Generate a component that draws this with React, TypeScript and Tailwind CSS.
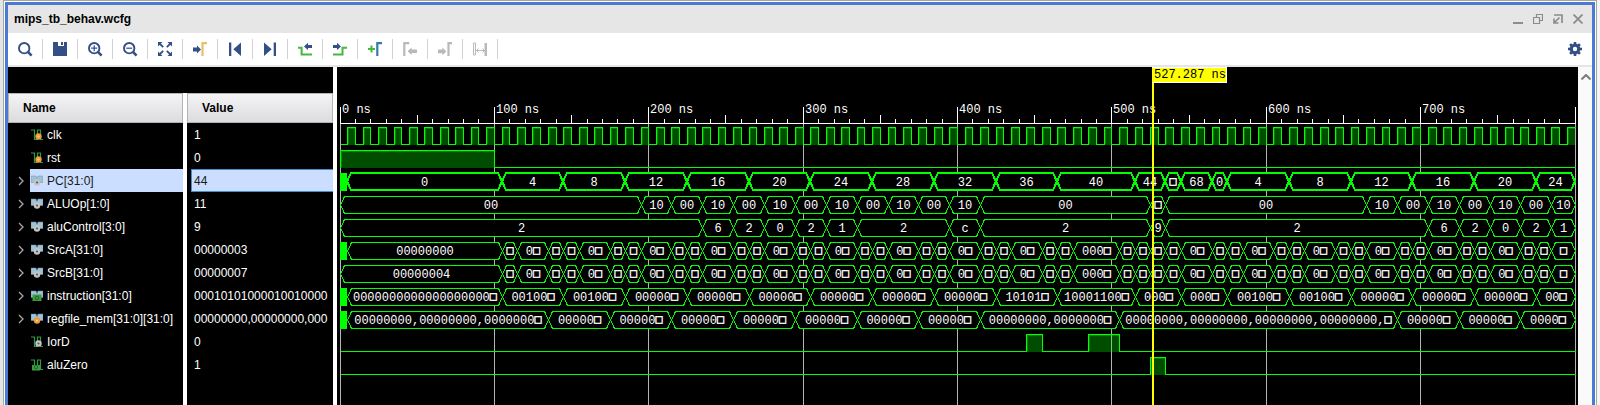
import type { ReactNode } from "react";

const NS_WIDTH = 1.54375;
const END = 800;
const LANE = 23;
const LANES_TOP = 56;
const GREEN = "#00ff00";

const px = (t: number) => Math.floor(t * NS_WIDTH);

type Segment = [end: number, label: string];

interface Signal {
  name: string;
  value: string;
  icon: "scalar" | "bus";
  badge: "orange" | "gray" | "green";
  selected?: boolean;
  pulses?: [number, number][];
  unknownUntil?: number;
  segments?: Segment[];
}

const srcTail: Segment[] = [
  [115, "□"], [135, "0□"], [145, "□"], [155, "□"], [175, "0□"], [185, "□"], [195, "□"],
  [215, "0□"], [225, "□"], [235, "□"], [255, "0□"], [265, "□"], [275, "□"], [295, "0□"],
  [305, "□"], [315, "□"], [335, "0□"], [345, "□"], [355, "□"], [375, "0□"], [385, "□"],
  [395, "□"], [415, "0□"], [425, "□"], [435, "□"], [455, "0□"], [465, "□"], [475, "□"],
  [505, "000□"], [515, "□"], [525, "□"], [535, "□"], [545, "□"], [565, "0□"], [575, "□"],
  [585, "□"], [605, "0□"], [615, "□"], [625, "□"], [645, "0□"], [655, "□"], [665, "□"],
  [685, "0□"], [695, "□"], [705, "□"], [725, "0□"], [735, "□"], [745, "□"], [765, "0□"],
  [775, "□"], [785, "□"], [800, "□"],
];

const clockPulses: [number, number][] = Array.from({ length: 80 }, (_, i) => [i * 10 + 5, i * 10 + 10]);

const signals: Signal[] = [
  { name: "clk", value: "1", icon: "scalar", badge: "orange", pulses: clockPulses },
  { name: "rst", value: "0", icon: "scalar", badge: "orange", pulses: [[0, 100]] },
  {
    name: "PC[31:0]", value: "44", icon: "bus", badge: "gray", selected: true, unknownUntil: 5,
    segments: [
      [105, "0"], [145, "4"], [185, "8"], [225, "12"], [265, "16"], [305, "20"], [345, "24"],
      [385, "28"], [425, "32"], [465, "36"], [515, "40"], [535, "44"], [545, "□"], [565, "68"],
      [575, "0"], [615, "4"], [655, "8"], [695, "12"], [735, "16"], [775, "20"], [800, "24"],
    ],
  },
  {
    name: "ALUOp[1:0]", value: "11", icon: "bus", badge: "gray",
    segments: [
      [195, "00"], [215, "10"], [235, "00"], [255, "10"], [275, "00"], [295, "10"], [315, "00"],
      [335, "10"], [355, "00"], [375, "10"], [395, "00"], [415, "10"], [525, "00"], [535, "□"],
      [665, "00"], [685, "10"], [705, "00"], [725, "10"], [745, "00"], [765, "10"], [785, "00"],
      [800, "10"],
    ],
  },
  {
    name: "aluControl[3:0]", value: "9", icon: "bus", badge: "gray",
    segments: [
      [235, "2"], [255, "6"], [275, "2"], [295, "0"], [315, "2"], [335, "1"], [395, "2"],
      [415, "c"], [525, "2"], [535, "9"], [705, "2"], [725, "6"], [745, "2"], [765, "0"],
      [785, "2"], [800, "1"],
    ],
  },
  {
    name: "SrcA[31:0]", value: "00000003", icon: "bus", badge: "gray", unknownUntil: 5,
    segments: [[105, "00000000"], ...srcTail],
  },
  {
    name: "SrcB[31:0]", value: "00000007", icon: "bus", badge: "gray",
    segments: [[105, "00000004"], ...srcTail],
  },
  {
    name: "instruction[31:0]", value: "00010101000010010000", icon: "bus", badge: "green",
    unknownUntil: 5,
    segments: [
      [105, "0000000000000000000□"], [145, "00100□"], [185, "00100□"], [225, "00000□"],
      [265, "00000□"], [305, "00000□"], [345, "00000□"], [385, "00000□"], [425, "00000□"],
      [465, "10101□"], [515, "10001100□"], [545, "000□"], [575, "000□"], [615, "00100□"],
      [655, "00100□"], [695, "00000□"], [735, "00000□"], [775, "00000□"], [800, "00□"],
    ],
  },
  {
    name: "regfile_mem[31:0][31:0]", value: "00000000,00000000,000", icon: "bus", badge: "orange",
    unknownUntil: 5,
    segments: [
      [135, "00000000,00000000,0000000□"], [175, "00000□"], [215, "00000□"], [255, "00000□"],
      [295, "00000□"], [335, "00000□"], [375, "00000□"], [415, "00000□"],
      [505, "00000000,0000000□"], [685, "00000000,00000000,00000000,00000000,□"],
      [725, "00000□"], [765, "00000□"], [800, "0000□"],
    ],
  },
  { name: "IorD", value: "0", icon: "scalar", badge: "gray", pulses: [[445, 455], [485, 505]] },
  { name: "aluZero", value: "1", icon: "scalar", badge: "green", pulses: [[525, 535]] },
];

const NAVY = "#334f86";
const LIME = "#45b93c";
const MUTED = "#b9b9b9";

function ToolIcon({ children }: { children: ReactNode }) {
  return (
    <svg className="size-4" viewBox="0 0 16 16" fill="none" aria-hidden="true">
      {children}
    </svg>
  );
}

function Lens({ children }: { children?: ReactNode }) {
  return (
    <ToolIcon>
      <circle cx="7.2" cy="7.2" r="5.2" stroke={NAVY} strokeWidth="1.9" />
      <path d="M11.2 11.2 14.6 14.6" stroke={NAVY} strokeWidth="2.6" />
      {children}
    </ToolIcon>
  );
}

const tools: { label: string; disabled?: boolean; icon: ReactNode }[] = [
  { label: "Find", icon: <Lens /> },
  {
    label: "Save",
    icon: (
      <ToolIcon>
        <path d="M1 1h5v4h6V1h3v14H1z" fill={NAVY} />
        <path d="M9 1h2v3H9z" fill={NAVY} />
      </ToolIcon>
    ),
  },
  {
    label: "Zoom In",
    icon: (
      <Lens>
        <path d="M4.2 7.2h6M7.2 4.2v6" stroke={NAVY} strokeWidth="1.2" />
      </Lens>
    ),
  },
  {
    label: "Zoom Out",
    icon: (
      <Lens>
        <path d="M4.2 7.2h6" stroke={NAVY} strokeWidth="1.2" />
      </Lens>
    ),
  },
  {
    label: "Zoom Fit",
    icon: (
      <ToolIcon>
        <path d="M1 1h4.5L1 5.5zM15 1v4.5L10.5 1zM1 15v-4.5L5.5 15zM15 15h-4.5l4.5-4.5z" fill={NAVY} />
        <path d="M2 2l4.2 4.2M14 2 9.8 6.2M2 14l4.2-4.2M14 14 9.8 9.8" stroke={NAVY} strokeWidth="1.8" />
      </ToolIcon>
    ),
  },
  {
    label: "Go to Cursor",
    icon: (
      <ToolIcon>
        <path d="M1 6.5h4V4.6L9 8.5 5 12.4v-2H1z" fill={NAVY} />
        <path d="M10.5 15V2.2H15" stroke="#e0c465" strokeWidth="2.2" />
      </ToolIcon>
    ),
  },
  {
    label: "Go to Start",
    icon: (
      <ToolIcon>
        <path d="M2 1.5h2.3v13.4H2zM14 1.5v13.4L6.3 8.2z" fill={NAVY} />
      </ToolIcon>
    ),
  },
  {
    label: "Go to End",
    icon: (
      <ToolIcon>
        <path d="M11.7 1.5H14v13.4h-2.3zM2 1.5v13.4l7.7-6.7z" fill={NAVY} />
      </ToolIcon>
    ),
  },
  {
    label: "Previous Transition",
    icon: (
      <ToolIcon>
        <path d="M1 6.8h3.6v6.8H15" stroke={LIME} strokeWidth="2" />
        <path d="M7 5.4 11 1.8v2.1h4v3.2h-4v2z" fill={NAVY} />
      </ToolIcon>
    ),
  },
  {
    label: "Next Transition",
    icon: (
      <ToolIcon>
        <path d="M1 13.4h9.5V6.8H15" stroke={LIME} strokeWidth="2" />
        <path d="M9 5.4 5 1.8v2.1H1v3.2h4v2z" fill={NAVY} />
      </ToolIcon>
    ),
  },
  {
    label: "Add Marker",
    icon: (
      <ToolIcon>
        <path d="M1 8h7M4.5 4.5v7" stroke={LIME} strokeWidth="2" />
        <path d="M10.3 15V2.2H15" stroke="#3579b1" strokeWidth="2.2" />
      </ToolIcon>
    ),
  },
  {
    label: "Previous Marker",
    disabled: true,
    icon: (
      <ToolIcon>
        <path d="M2.3 15V2.2h5" stroke={MUTED} strokeWidth="2.2" />
        <path d="M5.6 10.2 9.6 6.4v2H15v3.6H9.6v2z" fill={MUTED} />
      </ToolIcon>
    ),
  },
  {
    label: "Next Marker",
    disabled: true,
    icon: (
      <ToolIcon>
        <path d="M9.4 10.4 5.4 6.6v2H1v3.6h4.4v2z" fill={MUTED} />
        <path d="M11.5 15V2.2H15" stroke={MUTED} strokeWidth="2.2" />
      </ToolIcon>
    ),
  },
  {
    label: "Swap Cursors",
    disabled: true,
    icon: (
      <ToolIcon>
        <path d="M1.5 2h2v12h-2z" stroke={MUTED} />
        <path d="M12.5 2H15v13h-2.5z" fill={MUTED} />
        <path d="M4.5 9.5h8M6.5 7.5l-2 2 2 2M10.5 7.5l2 2-2 2" stroke={MUTED} />
      </ToolIcon>
    ),
  },
];

const windowControls: { label: string; icon: ReactNode }[] = [
  { label: "Minimize", icon: <path d="M0 9h10" strokeWidth="2" /> },
  { label: "Restore", icon: <path d="M3.5 3.5v-3h6v6h-3M.5 3.5h6v6h-6z" strokeWidth="1.2" /> },
  { label: "Float", icon: <path d="M1 1h8v8M6.5 3.5 2 8M1 4.5V9h4.5" strokeWidth="1.7" /> },
  { label: "Close", icon: <path d="M.5.5l9 9M9.5.5l-9 9" strokeWidth="1.8" /> },
];

const badgeColors = { orange: "#f09a35", gray: "#c4c4c4", green: "#3c9a3f" };

function SignalIcon({ icon, badge }: Pick<Signal, "icon" | "badge">) {
  const color = badgeColors[badge];
  return (
    <svg className="size-3 shrink-0" viewBox="0 0 12 12" fill="none" aria-hidden="true">
      {icon === "scalar" ? (
        <path d="M0 1h3.5v9.5h3V1h3v9.5H12" stroke="#2f9a45" strokeWidth="1.2" />
      ) : (
        <path d="M0 1h5l1 2.5L7 1h5v6.5H9.5L8 9H4L2.5 7.5H0z" fill="#9fc3d6" stroke="#6f8ea0" strokeWidth=".5" />
      )}
      {badge === "green" ? (
        <g>
          <path d={icon === "bus" ? "M1.5 4.5h9V11h-9z" : "M1 6h8v5.5H1z"} fill={color} />
          <circle cx={icon === "bus" ? 6 : 5} cy="8" r="1.7" stroke="#1f6a2a" />
        </g>
      ) : (
        <g>
          <circle cx={icon === "bus" ? 6 : 7.5} cy="7.5" r="3.2" fill={color} />
          <circle cx={icon === "bus" ? 6 : 7.5} cy="7.5" r="1.1" fill={badge === "orange" ? "#ffd9a0" : "#5a5a5a"} />
        </g>
      )}
    </svg>
  );
}

function SignalTable() {
  return (
    <table className="h-full w-[325px] table-fixed border-collapse text-left text-[12px] leading-4 text-white">
      <thead>
        <tr className="h-[30px] text-black">
          <th className="w-[175px] p-0 font-bold">
            <div className="flex h-[30px] items-center border border-[#b4b4b6] bg-linear-to-b from-[#f4f4f5] to-[#dcdce0] pl-3.5">
              Name
            </div>
          </th>
          <th className="w-1 bg-white p-0" aria-hidden="true" />
          <th className="p-0 font-bold">
            <div className="flex h-[30px] items-center border border-[#b4b4b6] bg-linear-to-b from-[#f4f4f5] to-[#dcdce0] pl-3.5">
              Value
            </div>
          </th>
        </tr>
      </thead>
      <tbody>
        {signals.map((s) => (
          <tr key={s.name} className="h-[23px]">
            <td className="p-0">
              <div className="flex h-[23px]">
                {s.icon === "bus" ? (
                  <button type="button" aria-label={`Expand ${s.name}`} className="flex w-[22px] items-center justify-center pl-1">
                    <svg className="h-2.5 w-1.5" viewBox="0 0 6 10" fill="none" aria-hidden="true">
                      <path d="M1 1l4 4-4 4" stroke="#a8a8a8" strokeWidth="1.3" />
                    </svg>
                  </button>
                ) : (
                  <span className="w-[22px]" />
                )}
                <span
                  className={
                    s.selected
                      ? "flex flex-1 items-center gap-1 bg-[#ccdeff] pl-px whitespace-nowrap text-[#1a1a1a]"
                      : "flex flex-1 items-center gap-1 pl-px whitespace-nowrap"
                  }
                >
                  <SignalIcon icon={s.icon} badge={s.badge} />
                  {s.name}
                </span>
              </div>
            </td>
            <td className="bg-white p-0" />
            <td className="overflow-hidden p-0">
              <div
                className={
                  s.selected
                    ? "ml-1 flex h-[23px] items-center border border-r-0 border-[#3d8fd1] bg-[#ccdeff] pl-0.5 text-[#1a1a1a]"
                    : "ml-1 flex h-[23px] items-center pl-[3px]"
                }
              >
                {s.value}
              </div>
            </td>
          </tr>
        ))}
        <tr>
          <td className="p-0" />
          <td className="bg-white p-0" />
          <td className="p-0" />
        </tr>
      </tbody>
    </table>
  );
}

function ScalarTrace({ pulses, top }: { pulses: [number, number][]; top: number }) {
  const high = top + 4;
  const low = top + 21;
  let line = pulses[0][0] === 0 ? "M.5" : `M.5 ${low + 0.5}H.5`;
  pulses.forEach(([a, b], i) => {
    const up = `${high + 0.5}H${px(b) + 0.5}`;
    line += i === 0 && a === 0 ? ` ${low + 0.5}V${up}` : `H${px(a) + 0.5}V${up}`;
    if (b < END) line += `V${low + 0.5}`;
  });
  line += `H${px(END) + 0.5}`;
  return (
    <g shapeRendering="crispEdges">
      {pulses.map(([a, b]) => (
        <g key={a} fill={GREEN}>
          <rect x={px(a)} y={high} width={px(b) - px(a)} height={low - high + 1} fillOpacity=".3" />
          <rect x={px(a) + 1} y={high + 1} width={px(b) - px(a) - 1} height="1" fillOpacity=".3" />
          <rect x={px(a) + 1} y={high + 2} width="1" height={low - high - 2} fillOpacity=".3" />
        </g>
      ))}
      <path d={line} fill="none" stroke={GREEN} />
    </g>
  );
}

function BusLabel({ label, x, y }: { label: string; x: number; y: number }) {
  const truncated = label.endsWith("□");
  return (
    <text x={x} y={y} textAnchor="middle" fill="#fff">
      {truncated ? label.slice(0, -1) : label}
      {truncated && (
        <tspan dy="-1" stroke="#fff" strokeWidth=".4" className="font-['DejaVu_Sans_Mono',monospace]">
          □
        </tspan>
      )}
    </text>
  );
}

function BusTrace({ signal, top }: { signal: Signal; top: number }) {
  const bold = signal.selected;
  const half = bold ? 0 : 0.5;
  const high = top + (bold ? 4 : 4.5);
  const low = top + (bold ? 21 : 21.5);
  const mid = (high + low) / 2;
  const first = signal.unknownUntil ?? 0;
  return (
    <g>
      {first > 0 && <rect x="0" y={top + 4} width={px(first)} height="18" fill={GREEN} />}
      {signal.segments!.map(([end, label], i, all) => {
        const start = i === 0 ? first : all[i - 1][0];
        const a = px(start) + half;
        const b = px(end) + half;
        return (
          <g key={end}>
            <path
              d={`M${a} ${mid}L${a + 4} ${high}H${b - 4}L${b} ${mid}L${b - 4} ${low}H${a + 4}Z`}
              fill="#000"
              stroke={GREEN}
              strokeWidth={bold ? 2 : 1}
              shapeRendering="crispEdges"
            />
            <BusLabel label={label} x={(a + b) / 2} y={top + 17} />
          </g>
        );
      })}
    </g>
  );
}

function Waveform() {
  return (
    <div className="relative min-w-0 flex-1 overflow-hidden bg-black">
      <svg
        className="absolute inset-0 h-full w-full font-['Liberation_Mono',monospace] text-[12px]"
        role="img"
        aria-label="Waveform"
      >
        <g transform="translate(3 0)">
          {Array.from({ length: 9 }, (_, i) => (
            <rect key={i} x={px(i * 100)} y={LANES_TOP} width="1" height="100%" fill="#b4b4b4" />
          ))}
          <rect x="0" y={LANES_TOP} width={px(END) + 1} height="1" fill="#fff" />
          {Array.from({ length: 81 }, (_, i) => {
            const h = i % 10 === 0 ? 16 : i % 5 === 0 ? 8 : 4;
            return <rect key={i} x={px(i * 10)} y={LANES_TOP - h} width="1" height={h} fill="#fff" />;
          })}
          {Array.from({ length: 8 }, (_, i) => (
            <text key={i} x={px(i * 100) + 2} y="46" fill="#fff">
              {i * 100} ns
            </text>
          ))}
          {signals.map((s, i) =>
            s.pulses ? (
              <ScalarTrace key={s.name} pulses={s.pulses} top={LANES_TOP + i * LANE} />
            ) : (
              <BusTrace key={s.name} signal={s} top={LANES_TOP + i * LANE} />
            ),
          )}
          <rect x="812" y="0" width="2" height="100%" fill="#ffff00" />
          <rect x="812" y="0" width="75" height="16" fill="#fff" />
          <rect x="812" y="1" width="74" height="14" fill="#ffff00" />
          <text x="814" y="11" fill="#000">
            527.287 ns
          </text>
        </g>
      </svg>
    </div>
  );
}

export default function App() {
  return (
    <div className="flex h-screen overflow-hidden bg-linear-to-r from-[#e4e4e4] to-[#f4f4f4] pr-[3px] pl-[3px] font-['Liberation_Sans',Arial,sans-serif]">
      <div className="flex min-w-0 flex-1 border-x border-t border-[#a5a5a5] bg-white px-px pt-px">
        <main className="flex min-w-0 flex-1 flex-col border-x-3 border-t-3 border-[#4a7bd0]">
          <header className="flex h-7 shrink-0 items-center justify-between bg-[#e6e6e6] pr-[9px] pl-1.5">
            <h1 className="text-[12px] leading-4 font-bold text-black">mips_tb_behav.wcfg</h1>
            <div className="flex gap-2.5">
              {windowControls.map((c) => (
                <button key={c.label} type="button" aria-label={c.label}>
                  <svg className="block size-2.5" viewBox="0 0 10 10" fill="none" stroke="#8c8c8c" aria-hidden="true">
                    {c.icon}
                  </svg>
                </button>
              ))}
            </div>
          </header>
          <div className="flex h-[34px] shrink-0 items-center border-b-2 border-[#e6e6e6] bg-white pr-[9px]" role="toolbar">
            {tools.map((t) => (
              <button
                key={t.label}
                type="button"
                aria-label={t.label}
                disabled={t.disabled}
                className="flex h-5 w-[35px] items-center justify-center border-r border-[#d2d2d2]"
              >
                {t.icon}
              </button>
            ))}
            <button type="button" aria-label="Settings" className="ml-auto">
              <svg className="block size-4" viewBox="0 0 16 16" aria-hidden="true">
                <g fill={NAVY}>
                  <path d="M6.7 1h2.6v14H6.7z" />
                  <path d="M6.7 1h2.6v14H6.7z" transform="rotate(45 8 8)" />
                  <path d="M6.7 1h2.6v14H6.7z" transform="rotate(90 8 8)" />
                  <path d="M6.7 1h2.6v14H6.7z" transform="rotate(135 8 8)" />
                  <circle cx="8" cy="8" r="5.4" />
                </g>
                <circle cx="8" cy="8" r="2.2" fill="#fff" />
              </svg>
            </button>
          </div>
          <div className="flex min-h-0 flex-1 bg-white">
            <section className="mr-1 flex w-[325px] shrink-0 flex-col overflow-hidden bg-black pt-[26px]">
              <SignalTable />
            </section>
            <Waveform />
            <div className="flex w-3.5 shrink-0 justify-end bg-[#fafafa] pt-1">
              <button type="button" aria-label="Scroll up" className="flex h-3 w-3 items-center justify-center">
                <svg className="h-1.5 w-2.5" viewBox="0 0 10 6" fill="none" aria-hidden="true">
                  <path d="M.5 5.5 5 1l4.5 4.5" stroke="#7a7a7a" strokeWidth="2" />
                </svg>
              </button>
            </div>
          </div>
        </main>
      </div>
    </div>
  );
}
